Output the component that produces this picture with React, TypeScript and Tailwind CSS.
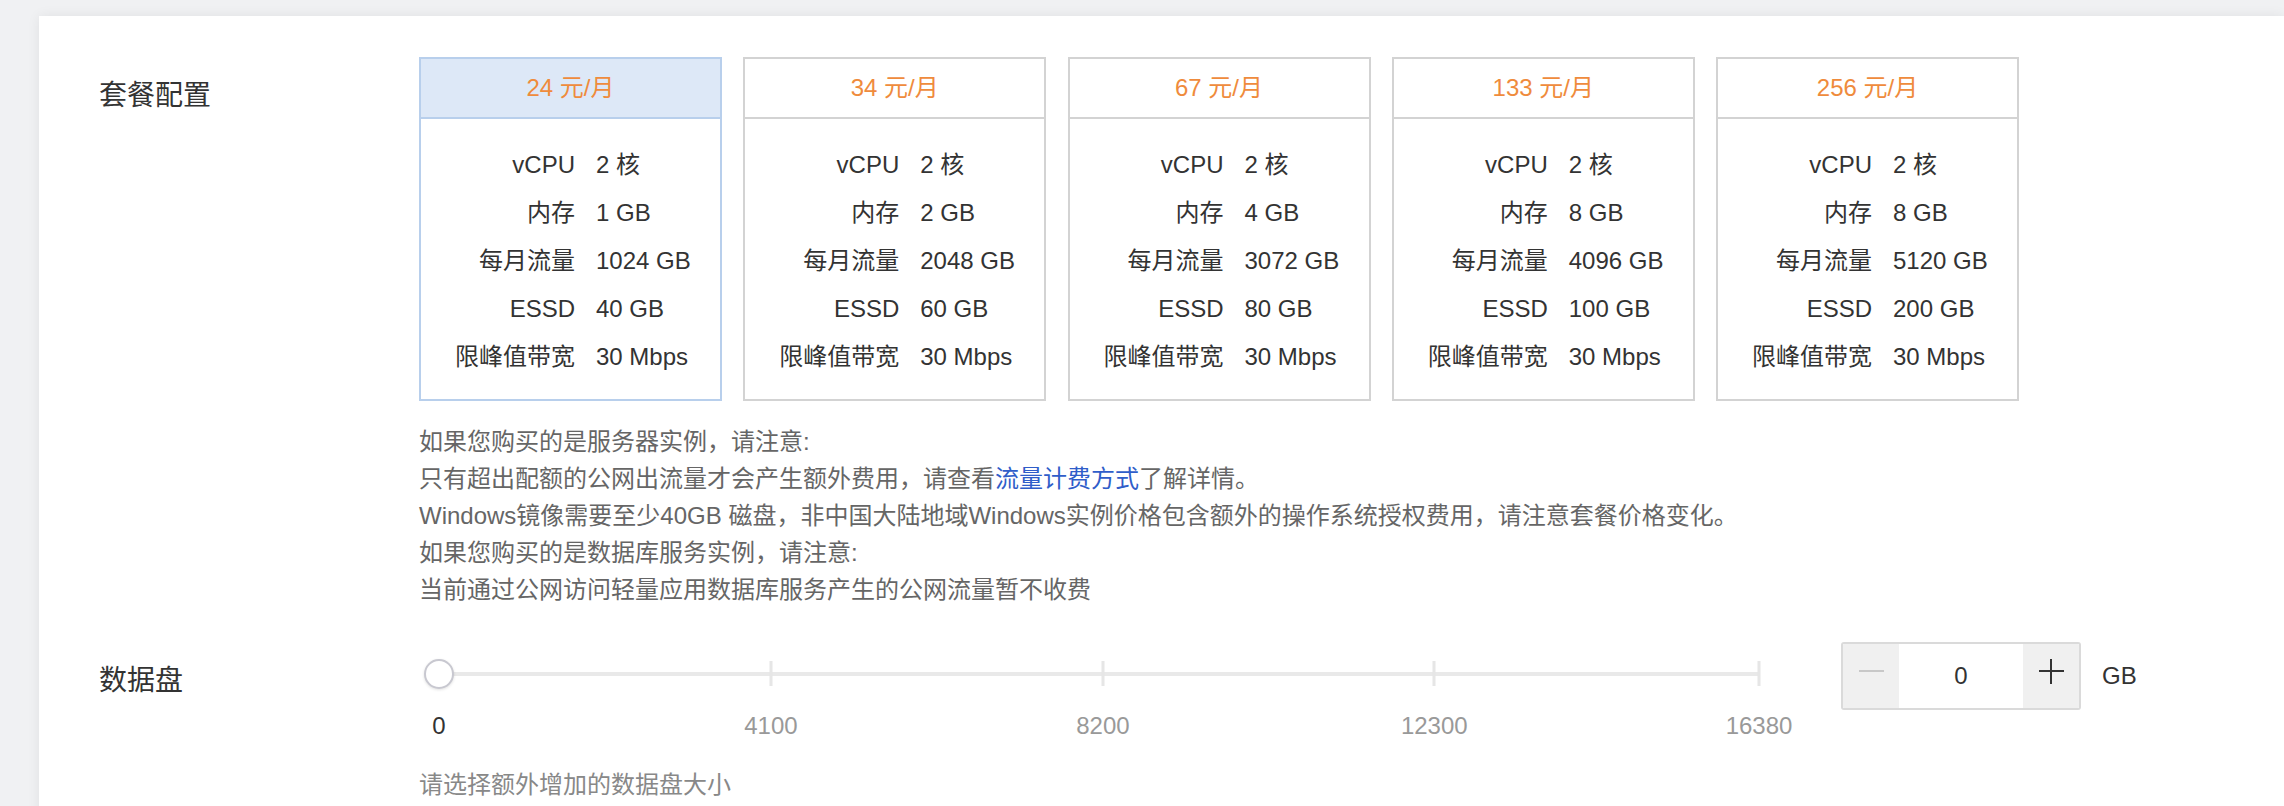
// ============================================================================
// Plan selection + data disk form
// ============================================================================

const plans = [
  { price: 24, cpu: 2, mem: 1, flow: 1024, essd: 40, bw: 30 },
  { price: 34, cpu: 2, mem: 2, flow: 2048, essd: 60, bw: 30 },
  { price: 67, cpu: 2, mem: 4, flow: 3072, essd: 80, bw: 30 },
  { price: 133, cpu: 2, mem: 8, flow: 4096, essd: 100, bw: 30 },
  { price: 256, cpu: 2, mem: 8, flow: 5120, essd: 200, bw: 30 },
]

const ticks = [
  { value: '0', pos: '0%' },
  { value: '4100', pos: '25.15%' },
  { value: '8200', pos: '50.3%' },
  { value: '12300', pos: '75.4%' },
  { value: '16380', pos: '100%' },
]

function PlanCard({ plan, selected }: { plan: (typeof plans)[number]; selected: boolean }) {
  const rows: [string, string][] = [
    ['vCPU', `${plan.cpu} 核`],
    ['内存', `${plan.mem} GB`],
    ['每月流量', `${plan.flow} GB`],
    ['ESSD', `${plan.essd} GB`],
    ['限峰值带宽', `${plan.bw} Mbps`],
  ]
  return (
    <div
      className={`w-[303px] shrink-0 border-2 cursor-pointer ${
        selected ? 'border-[#b8cfec]' : 'border-[#d3d3d3]'
      }`}
    >
      <div
        className={`h-[60px] flex items-center justify-center text-[#ef8b3c] border-b-2 ${
          selected ? 'bg-[#dde8f7] border-[#b8cfec]' : 'bg-white border-[#d3d3d3]'
        }`}
      >
        {plan.price} 元/月
      </div>
      <div className="pt-[22px] pb-[18px]">
        {rows.map(([label, value]) => (
          <div key={label} className="flex h-[48px] items-center">
            <span className="w-[154px] text-right">{label}</span>
            <span className="pl-[21px]">{value}</span>
          </div>
        ))}
      </div>
    </div>
  )
}

function DiskSlider() {
  return (
    <div className="w-[1360px] shrink-0 px-5">
      <div className="relative h-[68px]">
        <div className="absolute left-0 right-0 top-[30px] h-[4px] bg-[#e9e9e9]" />
        {ticks.slice(1).map((t) => (
          <div
            key={t.value}
            className="absolute top-[19px] h-[25px] w-[3px] -translate-x-1/2 bg-[#e6e6e6]"
            style={{ left: t.pos }}
          />
        ))}
        <div className="absolute left-0 top-[17px] h-[30px] w-[30px] -translate-x-1/2 rounded-full border-2 border-[#c8c8d0] bg-white shadow-[0_1px_3px_rgba(0,0,0,0.12)]" />
      </div>
      <div className="relative h-[32px] leading-[32px]">
        {ticks.map((t, i) => (
          <span
            key={t.value}
            className={`absolute top-0 -translate-x-1/2 ${i === 0 ? 'text-[#333]' : 'text-[#999]'}`}
            style={{ left: t.pos }}
          >
            {t.value}
          </span>
        ))}
      </div>
    </div>
  )
}

function Stepper() {
  return (
    <div className="flex h-[68px] w-[240px] rounded-[3px] border-2 border-[#dadada] overflow-hidden">
      <button className="flex w-[56px] items-center justify-center bg-[#f0f0f0] pb-[10px] cursor-not-allowed">
        <span className="block h-[2px] w-[25px] bg-[#c8c8c8]" />
      </button>
      <div className="flex flex-1 items-center justify-center bg-white text-[#333]">0</div>
      <button className="relative flex w-[56px] items-center justify-center bg-[#f0f0f0] pb-[10px]">
        <span className="relative block h-[25px] w-[25px]">
          <span className="absolute left-0 top-[11.5px] h-[2px] w-[25px] bg-[#333]" />
          <span className="absolute top-0 left-[11.5px] h-[25px] w-[2px] bg-[#333]" />
        </span>
      </button>
    </div>
  )
}

export default function App() {
  return (
    <div className="min-h-screen overflow-hidden bg-[#f0f1f3] pl-[39px] pt-4 font-['Liberation_Sans','Noto_Sans_CJK_SC',sans-serif] text-[24px] text-[#333]">
      <div className="min-h-[800px] bg-white pl-[60px] pt-[41px] pb-10 shadow-[0_0_12px_rgba(0,0,0,0.07)]">
        <section className="flex">
          <div className="w-[320px] shrink-0 pt-[19px] text-[28px] leading-[40px]">套餐配置</div>
          <div>
            <div className="flex gap-[21.25px]">
              {plans.map((p, i) => (
                <PlanCard key={p.price} plan={p} selected={i === 0} />
              ))}
            </div>
            <div className="mt-[22px] leading-[37px] text-[#666]">
              <p>如果您购买的是服务器实例，请注意:</p>
              <p>
                只有超出配额的公网出流量才会产生额外费用，请查看
                <a className="text-[#2f5dc9] cursor-pointer">流量计费方式</a>了解详情。
              </p>
              <p>Windows镜像需要至少40GB 磁盘，非中国大陆地域Windows实例价格包含额外的操作系统授权费用，请注意套餐价格变化。</p>
              <p>如果您购买的是数据库服务实例，请注意:</p>
              <p>当前通过公网访问轻量应用数据库服务产生的公网流量暂不收费</p>
            </div>
          </div>
        </section>

        <section className="mt-[34px] flex">
          <div className="w-[320px] shrink-0 pt-[19px] text-[28px] leading-[40px]">数据盘</div>
          <div>
            <div className="flex items-start">
              <DiskSlider />
              <div className="ml-[62px] flex items-center">
                <Stepper />
                <span className="ml-[21px]">GB</span>
              </div>
            </div>
            <div className="mt-[27px] leading-[32px] text-[#888]">请选择额外增加的数据盘大小</div>
          </div>
        </section>
      </div>
    </div>
  )
}
